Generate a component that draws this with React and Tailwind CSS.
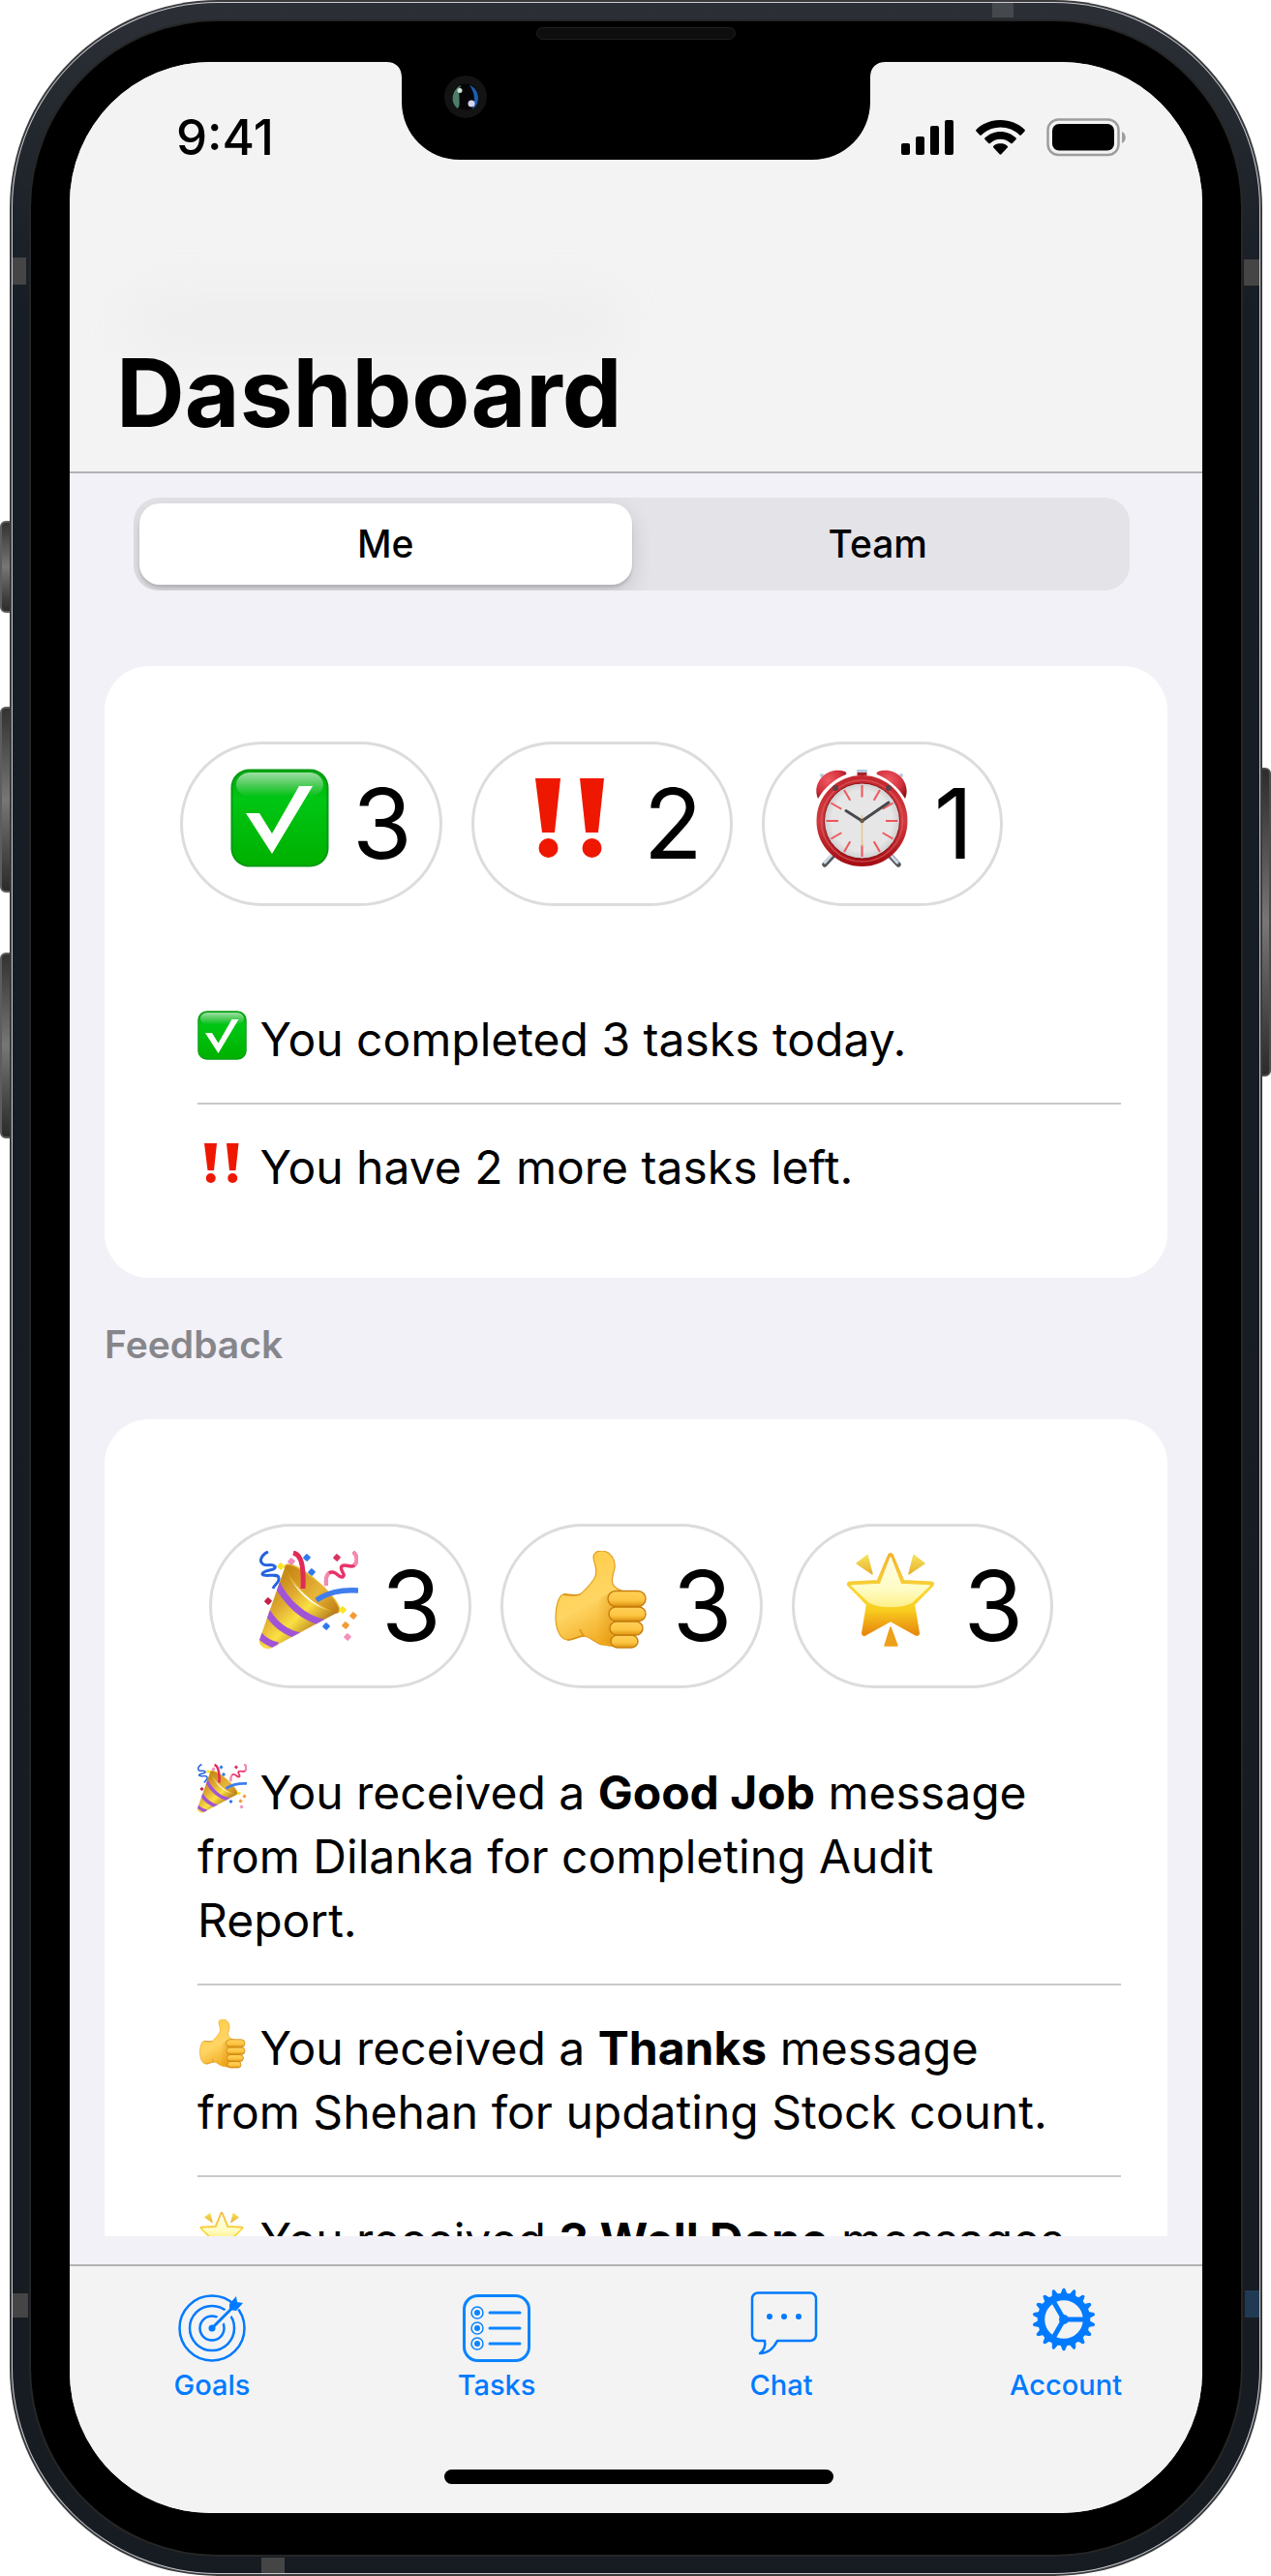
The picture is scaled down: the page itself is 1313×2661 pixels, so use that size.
import { useState } from 'react';

/* ---------- Emoji drawings, all on a 102 x 102 grid ---------- */

function CheckEmoji({ className }) {
  return (
    <svg viewBox="0 0 102 102" className={className} role="img" aria-label="Completed">
      <defs>
        <linearGradient id="checkBase" x1="0" y1="0" x2="0" y2="1">
          <stop offset="0" stopColor="#00a80f" />
          <stop offset="0.3" stopColor="#00c614" />
          <stop offset="1" stopColor="#00b000" />
        </linearGradient>
        <linearGradient id="checkShine" x1="0" y1="0" x2="0" y2="1">
          <stop offset="0" stopColor="#fff" stopOpacity="0.62" />
          <stop offset="1" stopColor="#fff" stopOpacity="0" />
        </linearGradient>
      </defs>
      <rect x="0.5" y="0.5" width="101" height="101" rx="19" fill="#079a12" />
      <rect x="2.5" y="2.5" width="97" height="97" rx="17" fill="url(#checkBase)" />
      <rect x="6" y="4" width="90" height="25" rx="14" fill="url(#checkShine)" />
      <path d="M16 46h14l13 21 28-49h14L43 88Z" fill="#fff" />
    </svg>
  );
}

function BangEmoji({ className }) {
  return (
    <svg viewBox="0 0 102 102" className={className} role="img" aria-label="Important">
      <g fill="#ee1700">
        <path d="M14 10h26l-6 56H21Z" />
        <circle cx="27.500" cy="82" r="10" />
        <path d="M60 10h25l-6 56H66Z" />
        <circle cx="72.500" cy="82" r="10" />
      </g>
    </svg>
  );
}

const CLOCK_MARKS = [0, 30, 60, 90, 120, 150, 180, 210, 240, 270, 300, 330];

function ClockEmoji({ className }) {
  return (
    <svg viewBox="0 0 102 102" className={className} role="img" aria-label="Due soon">
      <defs>
        <linearGradient id="clockRim" x1="0" y1="0" x2="0" y2="1">
          <stop offset="0" stopColor="#c4282e" />
          <stop offset="0.5" stopColor="#d23a3f" />
          <stop offset="1" stopColor="#a50f14" />
        </linearGradient>
        <radialGradient id="clockBell" cx="0.4" cy="0.35" r="0.75">
          <stop offset="0" stopColor="#ef5a62" />
          <stop offset="0.6" stopColor="#d4313e" />
          <stop offset="1" stopColor="#8f1116" />
        </radialGradient>
        <radialGradient id="clockFace" cx="0.5" cy="0.5" r="0.5">
          <stop offset="0.8" stopColor="#e6e6e6" />
          <stop offset="1" stopColor="#cfcfd1" />
        </radialGradient>
      </defs>
      <path d="M13 99 25 86M89 99 77 86" stroke="#54585e" strokeWidth="5.500" strokeLinecap="round" />
      <path d="M13 97 24 85M88 97 77 85" stroke="#cfdbe6" strokeWidth="3" strokeLinecap="round" />
      <rect x="46" y="1" width="11" height="3" rx="1" fill="#b4cadb" />
      <rect x="46.500" y="4" width="10" height="3" fill="#a3252b" />
      <path d="M51.500 7v6" stroke="#9aa7b3" strokeWidth="2" />
      <circle cx="10" cy="7" r="2" fill="#b4cadb" />
      <circle cx="92" cy="7" r="2" fill="#b4cadb" />
      <path d="M6 31C-1 15 15-3 34 3c1 1 2 2 1 3C23 11 13 19 6 31Z" fill="url(#clockBell)" />
      <path d="M96 31c7-16-9-34-28-28-1 1-2 2-1 3 12 5 22 13 29 25Z" fill="url(#clockBell)" />
      <circle cx="51.500" cy="54" r="42.500" fill="none" stroke="url(#clockRim)" strokeWidth="9" />
      <circle cx="51.500" cy="54" r="42" fill="none" stroke="#e0646a" strokeWidth="1.500" opacity="0.6" />
      <circle cx="51.500" cy="54" r="39" fill="url(#clockFace)" stroke="#8c1418" strokeWidth="1" />
      {CLOCK_MARKS.map((angle) => (
        <path key={angle} d="M51.500 17v12.500" transform={`rotate(${angle} 51.500 54)`} stroke="#f0555a" strokeWidth="2" />
      ))}
      <path d="M51.500 48v32" stroke="#e6c690" strokeWidth="1.500" />
      <path d="M51.500 54 35 43.500" stroke="#46484b" strokeWidth="3" strokeLinecap="round" />
      <path d="M51.500 54 79 35" stroke="#46484b" strokeWidth="3" strokeLinecap="round" />
      <circle cx="51.500" cy="54" r="2.200" fill="#6b5b48" />
      <circle cx="24" cy="20" r="3" fill="#5f4044" />
      <circle cx="79" cy="20" r="3" fill="#5f4044" />
    </svg>
  );
}

const CONFETTI = [
  [33, 11, '#f08bc0'], [49, 7, '#2f79ef'], [80, 7, '#d8345f'], [22, 16, '#f7e52a'], [54, 22, '#2f79ef'],
  [9, 52, '#c22048'], [86, 61, '#f7e52a'], [97, 67, '#f59a35'], [89, 77, '#f59a35'], [69, 78, '#2f79ef'],
  [91, 89, '#f58fbd'],
];

function PartyEmoji({ className }) {
  return (
    <svg viewBox="0 0 102 102" className={className} role="img" aria-label="Celebration">
      <defs>
        <linearGradient id="partyCone" x1="0.15" y1="0.3" x2="0.65" y2="0.85">
          <stop offset="0" stopColor="#c98d1c" />
          <stop offset="0.3" stopColor="#e0ac33" />
          <stop offset="0.62" stopColor="#fbe143" />
          <stop offset="1" stopColor="#b57b1d" />
        </linearGradient>
        <linearGradient id="partyMouth" x1="0" y1="0" x2="1" y2="0">
          <stop offset="0" stopColor="#c4810f" />
          <stop offset="0.6" stopColor="#e8b63a" />
          <stop offset="1" stopColor="#bd7a12" />
        </linearGradient>
        <clipPath id="partyClip">
          <path d="M27 15C32 38 56 62 82 63L13 100C7 104-1 98 0 92Z" />
        </clipPath>
      </defs>
      <ellipse cx="54.500" cy="39" rx="36.500" ry="9" transform="rotate(41 54.500 39)" fill="url(#partyMouth)" stroke="#e7b62e" strokeWidth="1.500" />
      <path d="M27 15C32 38 56 62 82 63L13 100C7 104-1 98 0 92Z" fill="url(#partyCone)" />
      <g clipPath="url(#partyClip)" fill="none" stroke="#a155d6" strokeWidth="7">
        <path d="M17 32C28 54 46 70 66 74" />
        <path d="M8 63C16 76 28 85 42 88" />
        <path d="M-1 86C4 92 10 96 19 98" />
      </g>
      <path d="M9 1C2 4-1 11 4 14c4 2 9-1 12 2 2 5-12 3-13 8 2 4 16-2 17 4 1 5-4 6-6 11" fill="none" stroke="#2563e0" strokeWidth="3" />
      <path d="M35 2c8 2 11 12 10 37" fill="none" stroke="#e22a58" strokeWidth="5" />
      <path d="M69 36c-1-8 1-15 7-14 5 1 6 6 10 5 4-2-4-8-1-11 4-3 9 2 13-1 4-4 3-10-1-14" fill="none" stroke="#e8346a" strokeWidth="3.500" />
      <path d="M69 36c-1-7 0-11 3-13M98 15c4-4 3-10-1-14" fill="none" stroke="#f48ab0" strokeWidth="4" />
      <path d="M59 51c12-8 24-11 43-10" fill="none" stroke="#3f7df0" strokeWidth="5.500" />
      {CONFETTI.map(([x, y, color]) => (
        <rect key={`${x}-${y}`} x={x - 3} y={y - 3} width="6" height="6" rx="1" transform={`rotate(42 ${x} ${y})`} fill={color} />
      ))}
    </svg>
  );
}

function ThumbEmoji({ className }) {
  return (
    <svg viewBox="0 0 102 102" className={className} role="img" aria-label="Thumbs up">
      <defs>
        <linearGradient id="thumbSkin" x1="0.2" y1="0" x2="0.6" y2="1">
          <stop offset="0" stopColor="#ffcb45" />
          <stop offset="0.55" stopColor="#ffd563" />
          <stop offset="1" stopColor="#f0a81c" />
        </linearGradient>
        <linearGradient id="thumbFinger" x1="0" y1="0" x2="0" y2="1">
          <stop offset="0" stopColor="#ffd158" />
          <stop offset="0.6" stopColor="#fdc542" />
          <stop offset="1" stopColor="#dd9310" />
        </linearGradient>
        <linearGradient id="thumbShade" x1="0" y1="0" x2="1" y2="0">
          <stop offset="0" stopColor="#d98d0c" stopOpacity="0" />
          <stop offset="1" stopColor="#d98d0c" stopOpacity="0.75" />
        </linearGradient>
      </defs>
      <path
        d="M44 7C44 2 48 0 52 0c9 0 15 8 14 18-1 5-4 11-2 16 2 5 8 7 12 8L80 98c-9 3-18 0-27-1-8-2-13-9-19-9-6 0-11 5-17 4C9 91 5 80 5 68c0-10 3-22 8-23 6-1 12 2 17 0 4-3 9-8 14-15 6-9 1-15 0-23Z"
        fill="url(#thumbSkin)" stroke="#e09d1c" strokeWidth="1.200"
      />
      <path d="M50 50 63 42V98L50 92C47 78 46 62 50 50Z" fill="url(#thumbShade)" opacity="0.5" />
      <path d="M13 45c6 1 12 2 17 0M17 92c6 0 11-4 17-4-1-2-3-4-4-7" fill="none" stroke="#d48a13" strokeWidth="1.800" opacity="0.7" />
      <g fill="url(#thumbFinger)" stroke="#c67f0d" strokeWidth="1.400">
        <rect x="62" y="87" width="28" height="13" rx="6.500" />
        <rect x="61" y="73" width="34" height="14" rx="7" />
        <rect x="60" y="58" width="38" height="14.500" rx="7.200" />
        <rect x="59" y="41.500" width="39" height="16" rx="8" />
      </g>
    </svg>
  );
}

function StarEmoji({ className }) {
  return (
    <svg viewBox="0 0 102 102" className={className} role="img" aria-label="Glowing star">
      <defs>
        <linearGradient id="starBody" x1="0" y1="0" x2="0" y2="1">
          <stop offset="0" stopColor="#f3b52f" />
          <stop offset="0.5" stopColor="#f9d837" />
          <stop offset="0.7" stopColor="#f8cd1e" />
          <stop offset="1" stopColor="#e98a0f" />
        </linearGradient>
        <linearGradient id="starGlow" x1="0" y1="0" x2="0" y2="1">
          <stop offset="0" stopColor="#fffde8" />
          <stop offset="0.65" stopColor="#fffcc4" />
          <stop offset="1" stopColor="#fdf08a" />
        </linearGradient>
        <linearGradient id="starRay" x1="0" y1="0" x2="0" y2="1">
          <stop offset="0" stopColor="#f6e25c" />
          <stop offset="1" stopColor="#e8b02f" />
        </linearGradient>
      </defs>
      <path
        d="M50 5 62 33 92 34.500 72 55 77 85 50 70 23 85 28 55 8 34.500 38 33Z"
        fill="url(#starBody)" stroke="url(#starBody)" strokeWidth="6" strokeLinejoin="round"
      />
      <path d="M50 7 60.500 34.500 90 36 72 53C60 59 40 59 28 53L10 36 39.500 34.500Z" fill="url(#starGlow)" stroke="url(#starGlow)" strokeWidth="1.500" strokeLinejoin="round" />
      <g fill="url(#starRay)" stroke="url(#starRay)" strokeWidth="1.500" strokeLinejoin="round">
        <path d="M15 13 26 4.500 31 24Z" />
        <path d="M85 13 74 4.500 69 24Z" />
      </g>
      <path d="M50 79 44 98H57Z" fill="#eda01a" stroke="#eda01a" strokeWidth="1.500" strokeLinejoin="round" />
    </svg>
  );
}

/* ---------- Tab bar icons ---------- */

function GoalsIcon() {
  return (
    <svg viewBox="0 0 70 70" className="h-[70px] w-[70px]" fill="none" stroke="currentColor" strokeWidth="2.500" aria-hidden="true">
      <circle cx="35" cy="35" r="33.500" />
      <circle cx="35" cy="35" r="23" />
      <circle cx="35" cy="35" r="12.500" />
      <path d="M37 33 66 6" stroke="#f3f3f3" strokeWidth="9" />
      <path d="M35 35 58 12" strokeWidth="3" />
      <path d="M53 16V10L60 2l1 6 6 1-7 8Z" fill="currentColor" stroke="none" />
      <circle cx="35" cy="35" r="3.500" fill="currentColor" stroke="none" />
    </svg>
  );
}

function TasksIcon() {
  return (
    <svg viewBox="0 0 70 70" className="h-[70px] w-[70px] text-[#0a84ff]" fill="none" stroke="currentColor" strokeWidth="3" aria-hidden="true">
      <rect x="1.500" y="1.500" width="67" height="67" rx="14" />
      {[19, 35, 51].map((y) => (
        <g key={y}>
          <circle cx="15" cy={y} r="6" strokeWidth="1.500" />
          <circle cx="15" cy={y} r="3" fill="currentColor" stroke="none" />
          <path d={`M28 ${y}H59`} strokeLinecap="round" />
        </g>
      ))}
    </svg>
  );
}

function ChatIcon() {
  return (
    <svg viewBox="-3 3 70 70" className="h-[70px] w-[70px] overflow-visible" fill="none" stroke="currentColor" strokeWidth="2.500" aria-hidden="true">
      <path d="M8 1.500H62a6 6 0 0 1 6 6V45a6 6 0 0 1-6 6H28C25 57 19 64 10 64c4-3 6-8 5-13H8a6 6 0 0 1-6-6V7.500a6 6 0 0 1 6-6Z" strokeLinejoin="round" />
      <g fill="currentColor" stroke="none">
        <circle cx="20" cy="26" r="3" />
        <circle cx="35" cy="26" r="3" />
        <circle cx="50" cy="26" r="3" />
      </g>
    </svg>
  );
}

const GEAR_TEETH = Array.from({ length: 18 }, (_, i) => i * 20);

function AccountIcon() {
  return (
    <svg viewBox="2 8 70 70" className="h-[70px] w-[70px] overflow-visible" fill="none" stroke="currentColor" aria-hidden="true">
      {GEAR_TEETH.map((angle) => (
        <path key={angle} d="M32 8 34 2.500Q35 1.500 36 2.500L38 8Z" transform={`rotate(${angle} 35 34)`} fill="currentColor" strokeWidth="1" />
      ))}
      <circle cx="35" cy="34" r="23.500" strokeWidth="7.500" />
      {[90, 210, 330].map((angle) => (
        <path key={angle} d="M35 34V13" transform={`rotate(${angle} 35 34)`} strokeWidth="5" />
      ))}
      <circle cx="35" cy="34" r="5" fill="currentColor" strokeWidth="0" />
    </svg>
  );
}

/* ---------- Status bar icons ---------- */

function SignalIcon() {
  return (
    <svg viewBox="0 0 55 36" className="h-9 w-[55px]" aria-hidden="true">
      <rect x="0" y="24" width="9" height="12" rx="2" />
      <rect x="15" y="17" width="9" height="19" rx="2" />
      <rect x="30" y="6" width="9" height="30" rx="2" />
      <rect x="45" y="0" width="9" height="36" rx="2" />
    </svg>
  );
}

function WifiIcon() {
  return (
    <svg viewBox="0 0 51 36" className="h-9 w-[51px]" aria-hidden="true">
      <path d="M25.500 0C16 0 7 3.500.600 9.800c-.600.600-.600 1.300 0 1.900l3.500 3.700c.500.500 1.200.500 1.700 0C11 10.500 18 7.600 25.500 7.600s14.500 2.900 19.700 7.800c.500.500 1.200.500 1.700 0l3.500-3.700c.600-.600.600-1.300 0-1.900C44 3.500 35 0 25.500 0Z" />
      <path d="M25.500 12c-6 0-11.700 2.300-15.900 6.300-.600.600-.600 1.300 0 1.900l3.600 3.700c.500.500 1.200.500 1.700 0 2.900-2.700 6.600-4.200 10.600-4.200s7.700 1.500 10.600 4.200c.500.500 1.200.500 1.700 0l3.600-3.700c.600-.600.600-1.300 0-1.900-4.200-4-9.900-6.300-15.900-6.300Z" />
      <path d="M25.500 24c-2.700 0-5.200 1-7.100 2.700-.600.500-.600 1.200-.100 1.800l6.300 6.800c.500.600 1.300.600 1.800 0l6.300-6.800c.500-.600.500-1.300-.100-1.800-1.900-1.700-4.400-2.700-7.100-2.700Z" />
    </svg>
  );
}

function BatteryIcon() {
  return (
    <svg viewBox="0 0 83 40" className="h-10 w-[83px]" aria-hidden="true">
      <rect x="1.500" y="1.500" width="73" height="36.500" rx="11" fill="none" stroke="#9d9d9d" strokeWidth="2.500" />
      <rect x="6" y="6" width="64" height="27.500" rx="7" />
      <path d="M78 14c5 2 5 10 0 12Z" fill="#9d9d9d" />
    </svg>
  );
}

/* ---------- Dashboard pieces ---------- */

function Pill({ icon: Icon, count }) {
  return (
    <div className="flex h-[170px] items-center rounded-full border-3 border-[#dcdcdc] pr-[28px] pl-[49px]">
      <Icon className="mb-3 h-[102px] w-[102px]" />
      <span className="ml-6 text-[100px] leading-none">{count}</span>
    </div>
  );
}

function Message({ icon: Icon, children }) {
  return (
    <li className="border-[#c9c9cb] py-8 pr-11 not-last:border-b-2">
      <Icon className="inline-block h-[51px] w-[51px] align-[-4px]" /> {children}
    </li>
  );
}

const TABS = [
  { label: 'Goals', icon: GoalsIcon },
  { label: 'Tasks', icon: TasksIcon },
  { label: 'Chat', icon: ChatIcon },
  { label: 'Account', icon: AccountIcon },
];

const SEGMENTS = ['Me', 'Team'];

function SegmentedControl() {
  const [selected, setSelected] = useState('Me');
  return (
    <div role="tablist" aria-label="Scope" className="mr-[75px] ml-[66px] grid h-24 shrink-0 grid-cols-2 overflow-hidden rounded-[26px] bg-[#e3e3e8] p-1.5">
      {SEGMENTS.map((name) => (
        <button
          key={name}
          type="button"
          role="tab"
          aria-selected={selected === name}
          onClick={() => setSelected(name)}
          className={
            selected === name
              ? 'rounded-[21px] bg-white text-[39px] font-medium shadow-[0_8px_22px_rgba(0,0,0,0.14),0_3px_3px_rgba(0,0,0,0.12)]'
              : 'rounded-[21px] text-[39px] font-medium'
          }
        >
          {name}
        </button>
      ))}
    </div>
  );
}

function Screen() {
  return (
    <div className="relative flex h-full flex-col overflow-hidden rounded-[146px] bg-[#f2f1f7]">
      <header className="relative border-b-2 border-[#b2b2b5] bg-[#f3f3f3]">
        <div className="absolute top-[238px] left-[60px] h-[64px] w-[510px] rounded-full bg-[#ededed] opacity-80 blur-xl" />
        <div className="flex items-center justify-between pt-[56px] pr-[78px] pl-[110px]">
          <time className="text-[51px] leading-[44px] font-medium">9:41</time>
          <div className="flex items-center gap-[22px]">
            <SignalIcon />
            <WifiIcon />
            <BatteryIcon />
          </div>
        </div>
        <h1 className="relative mt-[182px] mb-[21px] ml-[48px] text-[98px] leading-[120px] font-bold">Dashboard</h1>
      </header>

      <main className="min-h-0 flex-1 overflow-hidden pt-[25px] pb-[29px]">
        <div className="flex h-full flex-col overflow-hidden">
          <SegmentedControl />
          <section aria-label="Tasks" className="mx-9 mt-[78px] shrink-0 rounded-[46px] bg-white pt-[78px] pb-[49px]">
            <div className="ml-[78px] flex gap-[30px]">
              <Pill icon={CheckEmoji} count={3} />
              <Pill icon={BangEmoji} count={2} />
              <Pill icon={ClockEmoji} count={1} />
            </div>
            <ul className="mt-[73px] mr-12 ml-24 text-[48px] leading-[66px]">
              <Message icon={CheckEmoji}>You completed 3 tasks today.</Message>
              <Message icon={BangEmoji}>You have 2 more tasks left.</Message>
            </ul>
          </section>

          <h2 className="mx-9 mt-[45px] shrink-0 text-[39px] leading-[48px] font-semibold text-[#86868b]">Feedback</h2>

          <section aria-label="Feedback" className="mx-9 mt-[53px] shrink-0 rounded-[46px] bg-white pt-[108px] pb-[49px]">
            <div className="ml-[108px] flex gap-[30px]">
              <Pill icon={PartyEmoji} count={3} />
              <Pill icon={ThumbEmoji} count={3} />
              <Pill icon={StarEmoji} count={3} />
            </div>
            <ul className="mt-[43px] mr-12 ml-24 text-[48px] leading-[66px]">
              <Message icon={PartyEmoji}>
                You received a <strong>Good Job</strong> message from Dilanka for completing Audit Report.
              </Message>
              <Message icon={ThumbEmoji}>
                You received a <strong>Thanks</strong> message from Shehan for updating Stock count.
              </Message>
              <Message icon={StarEmoji}>
                You received <strong>3 Well Done</strong> messages
              </Message>
            </ul>
          </section>
        </div>
      </main>

      <nav aria-label="Main" className="-mr-1.5 border-t-2 border-[#b2b2b5] bg-[#f3f3f3]">
        <ul className="grid grid-cols-4 pt-[29px]">
          {TABS.map(({ label, icon: Icon }) => (
            <li key={label}>
              <a href={`#${label.toLowerCase()}`} className="flex flex-col items-center text-[29px] leading-9 font-medium text-[#007aff]">
                <Icon />
                <span className="mt-1.5">{label}</span>
              </a>
            </li>
          ))}
        </ul>
        <div className="mx-auto mt-[69px] mb-[30px] h-[15px] w-[402px] rounded-full bg-black" />
      </nav>

      <svg viewBox="0 0 516 102" className="absolute top-0 left-1/2 h-[102px] w-[516px] -translate-x-1/2" aria-hidden="true">
        <path d="M0 0C10 0 16 6 16 16V41C16 75 43 101 76 101H440C473 101 500 75 500 41V16C500 6 506 0 516 0Z" />
        <circle cx="82" cy="36" r="22" fill="#131313" />
        <circle cx="82" cy="36" r="13.500" fill="#050508" />
        <path d="M77 24C67 29 66 43 74 48 78 43 73 35 77 24Z" fill="#4d7d68" />
        <path d="M86 24C97 28 98 43 89 49 92 40 92 33 86 24Z" fill="#1d5cab" />
        <circle cx="76" cy="29.500" r="2.500" fill="#cfe3d9" />
        <circle cx="88" cy="43" r="3.500" fill="#d9d3ee" />
      </svg>
    </div>
  );
}

export default function App() {
  return (
    <div className="relative h-screen overflow-hidden bg-white pr-[9px] pl-[10px] font-['Inter',sans-serif] text-black">
      <div className="absolute top-[538px] left-0 h-[95px] w-3 rounded-l-md border-2 border-[#5d5d5d] bg-linear-to-b from-[#333] via-[#777] to-[#2b2b2b]" />
      <div className="absolute top-[730px] left-0 h-[192px] w-3 rounded-l-md border-2 border-[#5d5d5d] bg-linear-to-b from-[#333] via-[#777] to-[#2b2b2b]" />
      <div className="absolute top-[984px] left-0 h-[192px] w-3 rounded-l-md border-2 border-[#5d5d5d] bg-linear-to-b from-[#333] via-[#777] to-[#2b2b2b]" />
      <div className="absolute top-[793px] right-0 h-[319px] w-3 rounded-r-md border-2 border-[#4d4d4d] bg-linear-to-b from-[#2d2d2d] via-[#777] to-[#2b2b2b]" />

      <div className="relative h-full rounded-[215px] bg-[#3b3b3d] p-[2px]">
        <div className="h-full rounded-[213px] bg-[#c9ccd4] p-px">
          <div className="h-full rounded-[212px] bg-linear-to-b from-[#2c3036] via-[#171d24] via-12% to-[#171c22] p-[17px]">
            <div className="h-full rounded-[195px] border-2 border-[#262626] bg-black px-10 pt-[42px] pb-[43px]">
              <Screen />
            </div>
          </div>
        </div>
        <div className="absolute top-[28px] left-1/2 h-[13px] w-[206px] -translate-x-1/2 rounded-full border border-[#1f1f1f] bg-[#0e0e0e]" />
        <div className="absolute top-[266px] left-[3px] h-[28px] w-[14px] bg-[#454545]" />
        <div className="absolute top-[268px] right-[3px] h-[27px] w-[16px] bg-[#454545]" />
        <div className="absolute top-[3px] right-[257px] h-[15px] w-[22px] bg-[#45484c]" />
        <div className="absolute bottom-[3px] left-[260px] h-[16px] w-[24px] bg-[#454545]" />
        <div className="absolute bottom-[267px] left-[3px] h-[25px] w-[16px] bg-[#454545]" />
        <div className="absolute right-[3px] bottom-[267px] h-[28px] w-[15px] bg-[#203a54]" />
      </div>
    </div>
  );
}
